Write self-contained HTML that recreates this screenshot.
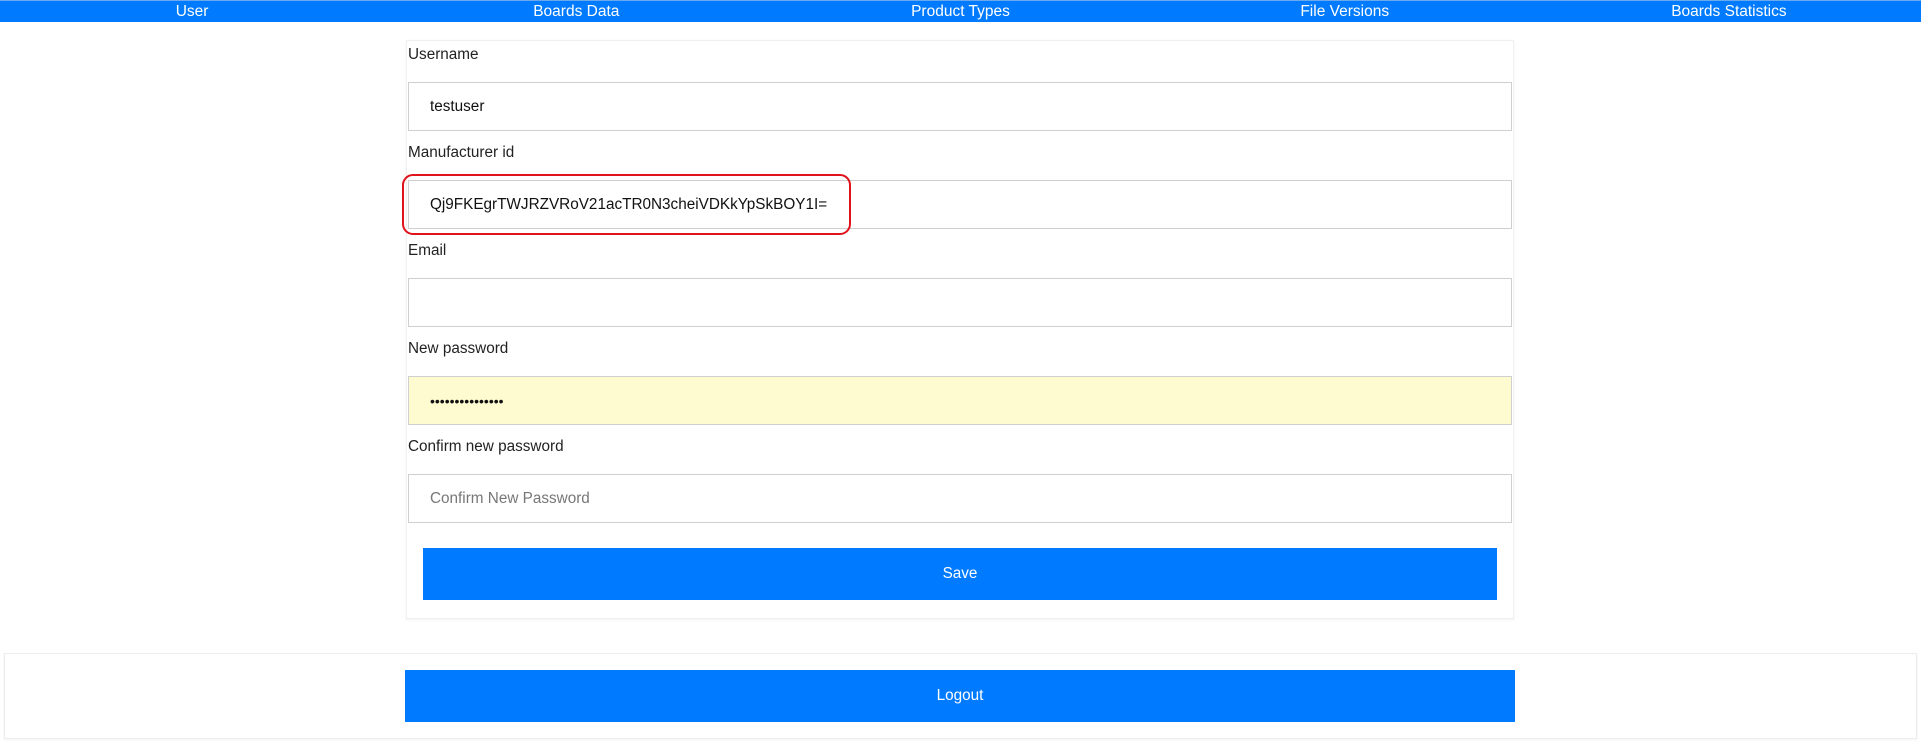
<!DOCTYPE html>
<html><head><meta charset="utf-8"><style>
*{box-sizing:border-box;margin:0;padding:0}
body{width:1921px;height:742px;background:#fff;font-family:"Liberation Sans",Arial,sans-serif;position:relative;overflow:hidden;color:#222}
.nav{position:absolute;left:0;top:0;width:1921px;height:22px;background:#007bff;display:flex;border-top:1px solid #6aa8f0}
.nav div{flex:1;text-align:center;color:#fff;font-size:15.5px;line-height:21px}
.card{position:absolute;left:406px;top:40px;width:1108px;height:579px;border:1px solid #f0f0f0;box-shadow:0 1px 3px rgba(0,0,0,.06)}
.lbl{position:absolute;left:408px;font-size:15.3px;color:#222}
.inp{position:absolute;left:408px;width:1104px;height:49px;border:1px solid #cfcfcf;background:#fff;font-size:15.3px;padding-left:21px;line-height:48px;color:#111}
.btn{position:absolute;background:#007bff;color:#fff;text-align:center;font-size:15.3px}
.foot{position:absolute;left:4px;top:653px;width:1913px;height:86px;border:1px solid #ececec;box-shadow:0 1px 3px rgba(0,0,0,.05)}
.red{position:absolute;left:402px;top:174px;width:449px;height:61px;border:2px solid #e0121b;border-radius:11px}
</style></head><body>
<div class="nav"><div>User</div><div>Boards Data</div><div>Product Types</div><div>File Versions</div><div>Boards Statistics</div></div>
<div class="card"></div>
<div class="lbl" style="top:46px">Username</div>
<div class="inp" style="top:82px">testuser</div>
<div class="lbl" style="top:144px">Manufacturer id</div>
<div class="inp" style="top:180px">Qj9FKEgrTWJRZVRoV21acTR0N3cheiVDKkYpSkBOY1I=</div>
<div class="red"></div>
<div class="lbl" style="top:242px">Email</div>
<div class="inp" style="top:278px"></div>
<div class="lbl" style="top:340px">New password</div>
<div class="inp" style="top:376px;background:#fefbd0;font-size:14px">•••••••••••••••</div>
<div class="lbl" style="top:438px">Confirm new password</div>
<div class="inp" style="top:474px;color:#777">Confirm New Password</div>
<div class="btn" style="left:423px;top:548px;width:1074px;height:52px;line-height:52px">Save</div>
<div class="foot"></div>
<div class="btn" style="left:405px;top:670px;width:1110px;height:52px;line-height:52px">Logout</div>
</body></html>
